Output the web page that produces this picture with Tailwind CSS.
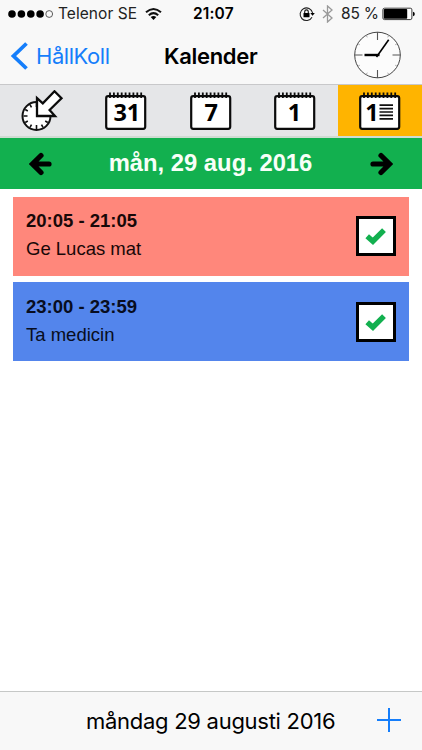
<!DOCTYPE html>
<html lang="sv">
<head>
<meta charset="utf-8">
<meta name="viewport" content="width=device-width">
<title>Kalender</title>
<script src="https://cdn.jsdelivr.net/npm/@tailwindcss/browser@4"></script>
</head>
<body class="bg-white overflow-hidden">
<svg class="hidden">
  <defs>
    <g id="calendar">
      <rect x="1.2" y="4.2" width="39" height="32.6" rx="2" fill="#fff" stroke="#0b0b0b" stroke-width="2.2"/>
      <path d="M5 0.5v5.500M8.900 0.500v5.500M12.800 0.500v5.500M16.700 0.500v5.500M20.600 0.500v5.500M24.500 0.500v5.500M28.400 0.500v5.500M32.300 0.500v5.500M36.200 0.500v5.500" stroke="#0b0b0b" stroke-width="1.800"/>
    </g>
    <path id="check" d="M3.200 10.200 8.900 15.200 20 4.200" fill="none" stroke="#12b04f" stroke-width="5.400"/>
  </defs>
</svg>
<main class="w-[422px] h-[750px] flex flex-col font-['Inter','Liberation_Sans',sans-serif] text-black">
  <header class="h-[84px] shrink-0 bg-[#f8f8f8] flex flex-col">
    <div class="h-7 flex items-center text-[15.5px] whitespace-nowrap">
      <svg class="ml-2 shrink-0" width="46" height="10" viewBox="0 0 46 10"><circle cx="4" cy="5" r="3.8"/><circle cx="13.4" cy="5" r="3.8"/><circle cx="22.8" cy="5" r="3.8"/><circle cx="32.1" cy="5" r="3.8"/><circle cx="41.2" cy="5" r="3.4" fill="none" stroke="#333" stroke-width=".8"/></svg>
      <span class="w-[87px] pl-1 text-[#222] tracking-[0.06px]">Telenor SE</span>
      <svg class="ml-1 shrink-0" width="17" height="14" viewBox="0 0 17 14"><path d="M1 5.3Q8.5-1.4 16 5.3M3.8 8.2Q8.5 4 13.2 8.2" fill="none" stroke="#111" stroke-width="2"/><path d="M5.7 10Q8.5 7.8 11.3 10L8.5 13Z"/></svg>
      <span class="w-[46px] ml-[31px] font-semibold tracking-[0.15px]">21:07</span>
      <svg class="ml-[60px] shrink-0" width="17" height="16" viewBox="0 0 17 16"><path d="M13 11.2A6.3 6.3 0 1 1 13.6 7" fill="none" stroke="#222" stroke-width="1.1"/><path d="M11.3 7h4.500l-2.200 2.800Z"/><rect x="4.500" y="7" width="6" height="4.300" rx=".5"/><path d="M5.700 7V5.700a1.800 1.800 0 0 1 3.600 0V7" fill="none" stroke="#111" stroke-width="1.100"/></svg>
      <svg class="ml-[6px] shrink-0" width="12" height="18" viewBox="0 0 12 18"><path d="m1 5 9 8-4.500 4V1L10 5l-9 8" fill="none" stroke="#999" stroke-width="1.300"/></svg>
      <span class="w-[40px] ml-[7px] text-[#222] tracking-[-0.2px]">85 %</span>
      <svg class="ml-[1px] shrink-0" width="33" height="14" viewBox="0 0 33 14"><rect x=".9" y="1.200" width="29" height="11.400" rx="1.600" fill="#fff" stroke="#222" stroke-width=".9"/><rect x="1.800" y="2" width="23.400" height="9.800" rx=".8"/><path d="M31 4.700q1.800.3 1.800 2.300T31 9.300Z"/></svg>
    </div>
    <div class="h-14 flex items-center whitespace-nowrap">
      <svg class="ml-[10px] shrink-0" width="19" height="30" viewBox="0 0 19 30"><path d="M16.500 2.500 3.500 15l13 12.500" fill="none" stroke="#157efb" stroke-width="3.800"/></svg>
      <span class="w-[128px] ml-[7px] text-[22px] text-[#157efb] tracking-[-0.45px]">HållKoll</span>
      <h1 class="w-[190px] text-[22px] font-semibold tracking-[-0.3px]">Kalender</h1>
      <svg class="-mt-[2px] shrink-0" width="48" height="48" viewBox="0 0 48 48"><circle cx="23.500" cy="24" r="22.800" fill="#fcfcfc" stroke="#444" stroke-width="1"/><path d="M23.500 1v8M23.500 39v8M.5 24h8M38.500 24h8" stroke="#555" stroke-width="1.100"/><path d="m34.900 4.300-1.200 2M43.200 12.600l-2 1.200M43.200 35.400l-2-1.200M34.900 43.700l-1.200-2M12.100 43.700l1.200-2M3.800 35.400l2-1.200M3.800 12.600l2 1.200M12.100 4.300l1.200 2" stroke="#aaa" stroke-width="1"/><path d="M10.500 24h15" stroke="#000" stroke-width="2.400"/><path d="M22.500 26 34.700 8.700" stroke="#000" stroke-width="1.600"/></svg>
    </div>
  </header>
  <nav class="h-[54px] shrink-0 grid grid-cols-5 bg-[#e5e6e8] border-t border-b-2 border-t-[#c8c8ca] border-b-[#cfdcd2]">
    <div class="pl-[21px] pt-[5px]">
      <svg width="43" height="42" viewBox="0 0 43 42"><circle cx="15.500" cy="26" r="14" fill="#fff" stroke="#111" stroke-width="2"/><path d="M15.500 13v4M15.500 35v4M2.500 26h4M24.500 26h4M22 14.700l-1.500 2.600M26.800 32.500l-2.600-1.500M22 37.300l-1.500-2.600M9 37.300l1.500-2.600M4.200 32.500l2.600-1.500M4.200 19.500 6.800 21M9 14.700l1.500 2.600" stroke="#111" stroke-width="1.600"/><path d="M16 8.200V26h18l-5.400-6L40.500 8.300 33.500 1.300 21.800 13.400Z" fill="#fff" stroke="#0b0b0b" stroke-width="2.300"/></svg>
    </div>
    <div class="pl-[21px] pt-[6.500px]">
      <svg width="43" height="40" viewBox="0 0 43 40"><use href="#calendar"/><text x="8.500" y="28.500" font-family="Noto Sans, sans-serif" font-weight="700" font-size="23.500" textLength="26.800">31</text></svg>
    </div>
    <div class="pl-[21px] pt-[6.500px]">
      <svg width="43" height="40" viewBox="0 0 43 40"><use href="#calendar"/><text x="21.300" y="28.500" text-anchor="middle" font-family="Noto Sans, sans-serif" font-weight="700" font-size="23.500">7</text></svg>
    </div>
    <div class="pl-[21px] pt-[6.500px]">
      <svg width="43" height="40" viewBox="0 0 43 40"><use href="#calendar"/><text x="20.500" y="28.500" text-anchor="middle" font-family="Noto Sans, sans-serif" font-weight="700" font-size="23.500">1</text></svg>
    </div>
    <div class="pl-[21px] pt-[6.500px] bg-[#ffb400]">
      <svg width="43" height="40" viewBox="0 0 43 40"><use href="#calendar"/><text x="13" y="28.500" text-anchor="middle" font-family="Noto Sans, sans-serif" font-weight="700" font-size="23.500">1</text><path d="M20.500 13.200h13.500M20.500 16.600h13.500M20.500 20h13.500M20.500 23.400h13.500M20.500 26.800h13.500" stroke="#111" stroke-width="1.700"/></svg>
    </div>
  </nav>
  <section class="h-[51px] shrink-0 bg-[#12b04f] flex items-center justify-between pl-[29px] pr-[29px] font-['Liberation_Sans',sans-serif]">
    <svg width="23" height="24" viewBox="0 0 23 24"><path d="M12 3.500 3.500 12l8.500 8.500M4.500 12H20" fill="none" stroke="#000" stroke-width="5.200" stroke-linecap="round"/></svg>
    <h2 class="text-[23.800px] font-bold text-[#f8fff8] whitespace-nowrap pb-[2px] pr-[1px]">mån, 29 aug. 2016</h2>
    <svg width="23" height="24" viewBox="0 0 23 24"><path d="M11 3.500 19.500 12 11 20.500M18.500 12H3" fill="none" stroke="#000" stroke-width="5.200" stroke-linecap="round"/></svg>
  </section>
  <section class="grow px-[13px] pt-[7.500px] flex flex-col gap-[6.500px] font-['Liberation_Sans',sans-serif] text-[18.500px]">
    <article class="w-[395.500px] h-[79px] bg-[#ff877b] flex items-center justify-between pl-[13px] pr-[13px] text-[#180808]">
      <div class="leading-7 -mt-[3px]"><p class="font-bold">20:05 - 21:05</p><p>Ge Lucas mat</p></div>
      <div class="size-10 bg-white border-[3px] border-black flex items-center justify-center"><svg class="shrink-0" width="24" height="20" viewBox="0 0 24 20"><use href="#check"/></svg></div>
    </article>
    <article class="w-[395.500px] h-[79px] bg-[#5385ec] flex items-center justify-between pl-[13px] pr-[13px] text-[#080d20]">
      <div class="leading-7 -mt-[1px]"><p class="font-bold">23:00 - 23:59</p><p>Ta medicin</p></div>
      <div class="size-10 bg-white border-[3px] border-black flex items-center justify-center"><svg class="shrink-0" width="24" height="20" viewBox="0 0 24 20"><use href="#check"/></svg></div>
    </article>
  </section>
  <footer class="h-[59px] shrink-0 bg-[#f8f8f8] border-t border-[#c6c8c7] flex items-center pl-[86px] whitespace-nowrap">
    <span class="w-[291px] text-[22px] tracking-[-0.280px]">måndag 29 augusti 2016</span>
    <svg class="-mt-[2px]" width="24" height="24" viewBox="0 0 24 24"><path d="M12 0v24M0 12h24" stroke="#157efb" stroke-width="2"/></svg>
  </footer>
</main>
</body>
</html>
